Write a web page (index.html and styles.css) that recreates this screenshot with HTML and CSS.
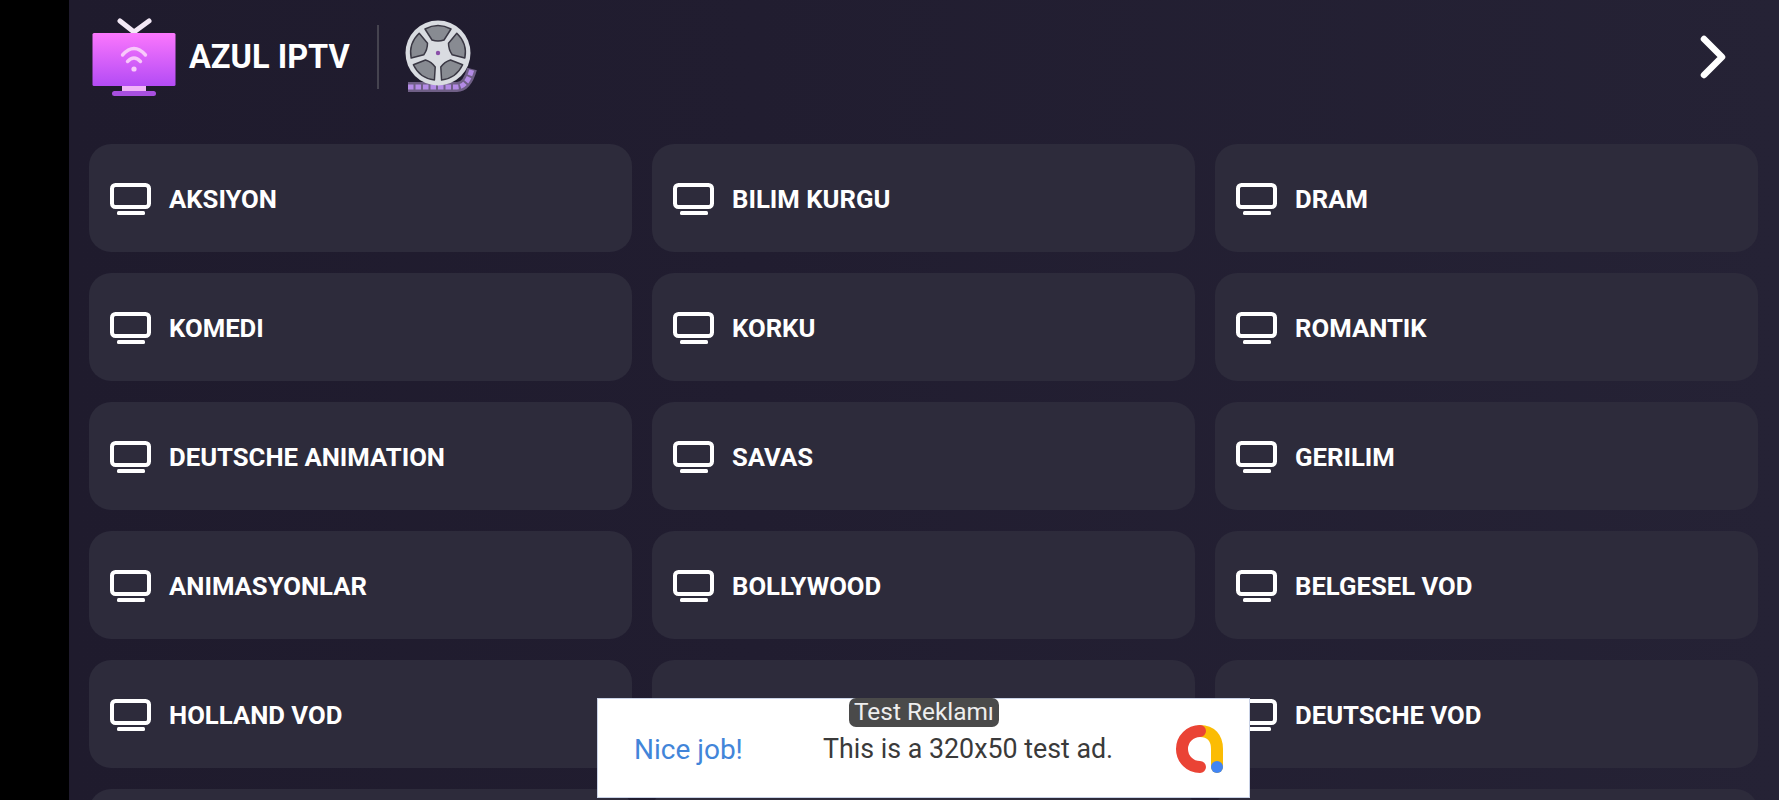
FILE: index.html
```html
<!DOCTYPE html>
<html lang="tr">

<head>
    <meta charset="UTF-8">
    <meta name="viewport" content="width=device-width, initial-scale=1.0">
    <title>AZUL IPTV</title>
    <link rel="stylesheet" href="styles.css">
</head>

<body>
    <svg class="icon-defs" aria-hidden="true">
        <symbol id="tv" viewBox="0 0 41 32">
            <rect x="2" y="2" width="37" height="22" rx="3.500" fill="none" stroke="#fff" stroke-width="4" />
            <rect x="7" y="28" width="28" height="4" rx="1.500" fill="#fff" />
        </symbol>
    </svg>

    <div class="app">
        <div class="strip"></div>

        <div class="main">
            <!-- top bar -->
            <div class="topbar">
                <svg class="logo" viewBox="0 0 84 78">
                    <defs>
                        <linearGradient id="screen" x1="0" y1="0" x2="0" y2="1">
                            <stop offset="0" stop-color="#fb77fd" />
                            <stop offset="1" stop-color="#b34bf5" />
                        </linearGradient>
                    </defs>
                    <path d="M28 3 L42 14 L57 3" fill="none" stroke="#f3e9f6" stroke-width="5" stroke-linecap="round" stroke-linejoin="round" />
                    <rect x="0.5" y="15" width="83" height="53" rx="1.500" fill="url(#screen)" />
                    <rect x="30" y="68" width="24" height="5" fill="#f0b4f7" />
                    <rect x="20" y="73" width="44" height="5" rx="2.500" fill="#a84fe0" />
                    <path d="M30.500 37 Q42 24 53.500 37" fill="none" stroke="#f8c9fb" stroke-width="3.400" stroke-linecap="round" />
                    <path d="M35.500 43.500 Q42 36.500 48.500 43.500" fill="none" stroke="#f8c9fb" stroke-width="3.400" stroke-linecap="round" />
                    <circle cx="42" cy="51" r="2.600" fill="#f8c9fb" />
                </svg>
                <span class="brand">AZUL IPTV</span>
                <div class="divider"></div>
                <svg class="reel" viewBox="0 0 74 74">
                    <path d="M3 67 H52 Q62 67 67 49" fill="none" stroke="#6f5f86" stroke-width="10" />
                    <path d="M3 67 H52 Q62 67 67 49" fill="none" stroke="#b48be6" stroke-width="5" stroke-dasharray="5.500 2" />
                    <circle cx="33" cy="33" r="32.500" fill="#d9dce1" />
                    <g transform="translate(33 33)" fill="#888b92" stroke="#3a3844" stroke-width="1.500" stroke-linejoin="round">
                        <path d="M-13 -24 A27 27 0 0 1 13 -24 L6 -13 Q0 -11 -6 -13 Z" />
                        <path transform="rotate(72)" d="M-13 -24 A27 27 0 0 1 13 -24 L6 -13 Q0 -11 -6 -13 Z" />
                        <path transform="rotate(144)" d="M-13 -24 A27 27 0 0 1 13 -24 L6 -13 Q0 -11 -6 -13 Z" />
                        <path transform="rotate(216)" d="M-13 -24 A27 27 0 0 1 13 -24 L6 -13 Q0 -11 -6 -13 Z" />
                        <path transform="rotate(288)" d="M-13 -24 A27 27 0 0 1 13 -24 L6 -13 Q0 -11 -6 -13 Z" />
                    </g>
                    <circle cx="33" cy="33" r="2.200" fill="#8a4fa8" />
                </svg>
                <svg class="next" viewBox="0 0 30 46">
                    <path d="M8 5 L26 23 L8 41" fill="none" stroke="#fff" stroke-width="6.500" stroke-linecap="round" stroke-linejoin="round" />
                </svg>
            </div>

            <!-- category grid -->
            <div class="grid">
                <div class="card"><svg class="card-icon"><use href="#tv" /></svg><span>AKSIYON</span></div>
                <div class="card"><svg class="card-icon"><use href="#tv" /></svg><span>BILIM KURGU</span></div>
                <div class="card"><svg class="card-icon"><use href="#tv" /></svg><span>DRAM</span></div>
                <div class="card"><svg class="card-icon"><use href="#tv" /></svg><span>KOMEDI</span></div>
                <div class="card"><svg class="card-icon"><use href="#tv" /></svg><span>KORKU</span></div>
                <div class="card"><svg class="card-icon"><use href="#tv" /></svg><span>ROMANTIK</span></div>
                <div class="card"><svg class="card-icon"><use href="#tv" /></svg><span>DEUTSCHE ANIMATION</span></div>
                <div class="card"><svg class="card-icon"><use href="#tv" /></svg><span>SAVAS</span></div>
                <div class="card"><svg class="card-icon"><use href="#tv" /></svg><span>GERILIM</span></div>
                <div class="card"><svg class="card-icon"><use href="#tv" /></svg><span>ANIMASYONLAR</span></div>
                <div class="card"><svg class="card-icon"><use href="#tv" /></svg><span>BOLLYWOOD</span></div>
                <div class="card"><svg class="card-icon"><use href="#tv" /></svg><span>BELGESEL VOD</span></div>
                <div class="card"><svg class="card-icon"><use href="#tv" /></svg><span>HOLLAND VOD</span></div>
                <div class="card"></div>
                <div class="card"><svg class="card-icon"><use href="#tv" /></svg><span>DEUTSCHE VOD</span></div>
                <div class="card"></div>
                <div class="card"></div>
                <div class="card"></div>
            </div>
        </div>
    </div>

    <!-- test banner over the grid -->
    <div class="ad">
        <span class="ad-label">Test Reklamı</span>
        <span class="ad-nice">Nice job!</span>
        <span class="ad-text">This is a 320x50 test ad.</span>
        <svg class="ad-logo" viewBox="0 0 48 48">
            <path d="M25 6 C36 6 42 13 42 24 V42" fill="none" stroke="#fbbc04" stroke-width="12" stroke-linecap="round" />
            <path d="M25 6 A18 18 0 1 0 25 42" fill="none" stroke="#ea4335" stroke-width="12" stroke-linecap="round" />
            <circle cx="42" cy="42" r="6" fill="#4285f4" />
        </svg>
    </div>
</body>

</html>
```

FILE: styles.css
```css
/* base */
html,
body {
    margin: 0;
    height: 800px;
    overflow: hidden;
}

body {
    font-family: Roboto, "Liberation Sans", sans-serif;
    background-color: #000;
    color: #fff;
}

.icon-defs {
    display: none;
}

.app {
    display: flex;
    height: 800px;
}

.strip {
    width: 69px;
    flex-shrink: 0;
    background-color: #000;
}

.main {
    flex: 1;
    overflow: hidden;
    background: linear-gradient(90deg, #1f1b2d 0%, #211d30 40%, #252235 100%);
}

/* top bar */
.topbar {
    display: flex;
    align-items: center;
    height: 114px;
    margin-bottom: 30px;
    padding: 0 53px 0 23px;
}

.logo {
    width: 84px;
    height: 78px;
}

.brand {
    margin-left: 13px;
    font-size: 32.500px;
    font-weight: 700;
    white-space: nowrap;
}

.divider {
    width: 2px;
    height: 64px;
    margin: 0 26px 0 27px;
    background-color: #45434f;
}

.reel {
    width: 74px;
    height: 74px;
}

.next {
    width: 30px;
    height: 46px;
    margin-left: auto;
}

/* category grid */
.grid {
    display: grid;
    grid-template-columns: repeat(3, 543px);
    grid-auto-rows: 108px;
    gap: 21px 20px;
    padding-left: 20px;
}

.card {
    display: flex;
    align-items: center;
    padding: 2px 0 0 21px;
    box-sizing: border-box;
    border-radius: 22px;
    background-color: #2d2b3b;
    font-size: 25.700px;
    font-weight: 700;
}

.card-icon {
    width: 41px;
    height: 32px;
    margin-right: 18px;
    flex-shrink: 0;
}

/* test banner */
.ad {
    position: absolute;
    left: 597px;
    top: 698px;
    width: 653px;
    height: 100px;
    box-sizing: border-box;
    display: flex;
    align-items: center;
    padding: 2px 26px 0 36px;
    background-color: #fff;
    border: 1px solid #c9d2e6;
    color: #3a3a3a;
}

.ad-label {
    position: absolute;
    left: 251px;
    top: -1px;
    height: 29px;
    line-height: 28px;
    padding: 0 5px;
    border-radius: 7px;
    background-color: #4a4a4a;
    color: #eee;
    font-size: 24.400px;
    white-space: nowrap;
}

.ad-nice {
    width: 189px;
    color: #4285d9;
    font-size: 28px;
}

.ad-text {
    font-size: 26.800px;
    white-space: nowrap;
}

.ad-logo {
    width: 48px;
    height: 48px;
    margin-left: auto;
}
```
